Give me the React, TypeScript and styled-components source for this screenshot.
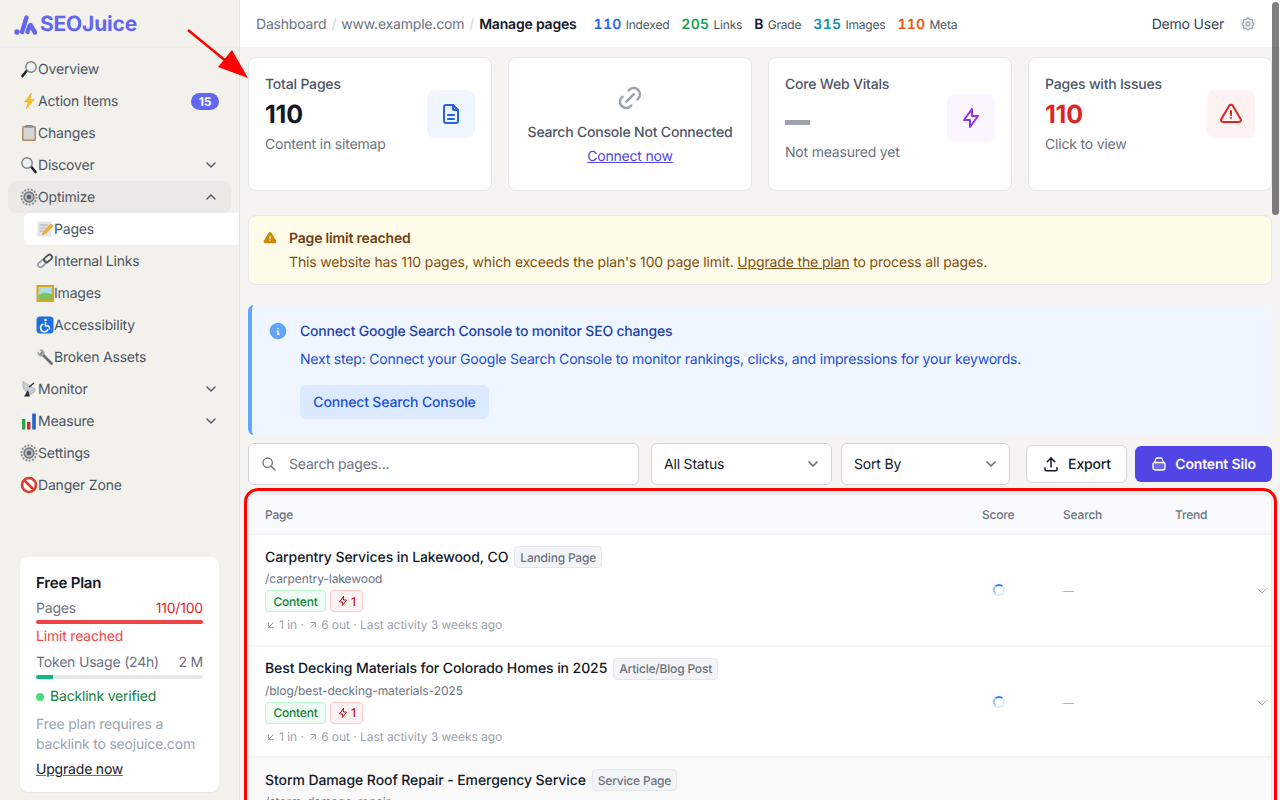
import React from 'react';
import styled, { createGlobalStyle } from 'styled-components';
import {
    TbAlertTriangle, TbAlertTriangleFilled, TbArrowDownLeft, TbArrowUpRight, TbBolt, TbChevronDown, TbChevronUp,
    TbFileDescription, TbInfoCircleFilled, TbLink, TbSearch, TbSettings, TbUpload,
} from 'react-icons/tb';

const GlobalStyle = createGlobalStyle`
    html, body { margin: 0; height: 100%; overflow: hidden; }
    body { font-family: Inter, "Liberation Sans", sans-serif; background: #f5f4f2; color: #111827; text-rendering: geometricPrecision; letter-spacing: -0.012em; }
    * { box-sizing: border-box; }
    button { text-rendering: geometricPrecision; letter-spacing: -0.012em; }
`;

const Shell = styled.div`
    display: flex;
    width: 1280px;
    height: 800px;
    overflow: hidden;
    position: relative;
`;

const Sidebar = styled.aside`
    flex: 0 0 240px;
    height: 800px;
    background: #f3f1ec;
    border-right: 1px solid #e6e4df;
    display: flex;
    flex-direction: column;
`;

const Brand = styled.div`
    height: 48px;
    flex: none;
    display: flex;
    align-items: center;
    gap: 1px;
    padding: 2px 0 0 13px;
    border-bottom: 1px solid #efede8;
    color: #6366f1;
    font-size: 21px;
    font-weight: 700;
`;

const Nav = styled.nav`
    display: flex;
    flex-direction: column;
    padding: 5px 0 0 8px;
`;

const NavRow = styled.div<{ $sub?: boolean; $open?: boolean; $active?: boolean }>`
    height: 32px;
    display: flex;
    align-items: center;
    font-size: 14px;
    color: #4b5563;
    margin-left: ${p => (p.$sub ? '16px' : '0')};
    margin-right: ${p => (p.$sub ? '0' : '8px')};
    padding: 0 12px 0 12px;
    background: ${p => (p.$active ? '#fff' : p.$open ? '#ebe9e5' : 'transparent')};
    border-radius: ${p => (p.$active ? '6px 0 0 6px' : '8px')};
`;

const NavEmoji = styled.svg`
    width: 18px;
    height: 18px;
    flex: none;
`;

const NavLabel = styled.span`
    flex: 1;
`;

const Count = styled.span`
    background: #6366f1;
    color: #fff;
    font-size: 12px;
    font-weight: 700;
    border-radius: 9px;
    height: 17px;
    width: 28px;
    display: flex;
    align-items: center;
    justify-content: center;
`;

const Chevron = styled.span`
    display: flex;
    color: #4b5563;
    font-size: 16px;
`;

const PlanCard = styled.div`
    margin: auto 20px 8px 20px;
    height: 235px;
    background: #fff;
    border-radius: 8px;
    padding: 17px 16px 0;
    box-shadow: 0 1px 2px rgba(0, 0, 0, 0.06);
    font-size: 14px;
    color: #6b7280;
`;

const PlanName = styled.div`
    font-size: 15px;
    line-height: 17px;
    font-weight: 600;
    color: #111827;
`;

const PlanLine = styled.div<{ $top?: number }>`
    display: flex;
    justify-content: space-between;
    line-height: 18px;
    margin-top: ${p => p.$top ?? 0}px;
`;

const PlanValue = styled.span<{ $red?: boolean }>`
    color: ${p => (p.$red ? '#dc2626' : '#6b7280')};
`;

const Track = styled.div<{ $top: number }>`
    height: 4px;
    margin-top: ${p => p.$top}px;
    border-radius: 2px;
    background: #e5e7eb;
    overflow: hidden;
`;

const Fill = styled.div<{ $color: string }>`
    height: 100%;
    background: ${p => p.$color};
`;

const LimitText = styled.div`
    color: #ef4444;
    line-height: 18px;
    margin: 4px 0 8px;
`;

const Verified = styled.div`
    display: flex;
    align-items: center;
    gap: 6px;
    color: #15803d;
    line-height: 18px;
    margin-top: 9px;
`;

const Dot = styled.span`
    width: 8px;
    height: 8px;
    border-radius: 50%;
    background: #4ade80;
`;

const PlanNote = styled.div`
    color: #9ca3af;
    line-height: 20px;
    margin-top: 9px;
`;

const UpgradeLink = styled.a`
    display: block;
    margin-top: 5px;
    line-height: 20px;
    color: #111827;
    text-decoration: underline;
    text-decoration-color: #6b7280;
`;

const Main = styled.main`
    flex: 1;
    min-width: 0;
    display: flex;
    flex-direction: column;
`;

const TopBar = styled.header`
    height: 47px;
    flex: none;
    background: #fff;
    display: flex;
    align-items: center;
    padding: 1px 24px 0 16px;
    font-size: 14px;
`;

const Crumb = styled.span<{ $current?: boolean }>`
    color: ${p => (p.$current ? '#111827' : '#6b7280')};
    font-weight: ${p => (p.$current ? 600 : 400)};
`;

const Slash = styled.span`
    color: #d1d5db;
    margin: 0 5px;
`;

const Stats = styled.div`
    display: flex;
    gap: 12px;
    margin-left: 17px;
`;

const Stat = styled.span`
    font-size: 12px;
    color: #4b5563;
    display: flex;
    align-items: baseline;
    gap: 4px;
`;

const StatValue = styled.b<{ $color: string }>`
    font-size: 14px;
    font-weight: 600;
    font-variant-numeric: tabular-nums;
    letter-spacing: 0.3px;
    color: ${p => p.$color};
`;

const UserName = styled.span`
    margin-left: auto;
    color: #374151;
`;

const Gear = styled.span`
    display: flex;
    margin-left: 16px;
    color: #9ca3af;
    font-size: 16px;
`;

const Content = styled.div`
    padding: 10px 8px 0;
    display: flex;
    flex-direction: column;
`;

const CardGrid = styled.div`
    display: grid;
    grid-template-columns: repeat(4, 244px);
    gap: 16px;
`;

const Card = styled.div`
    height: 134px;
    background: #fff;
    border: 1px solid #e5e7eb;
    border-radius: 8px;
    padding: 17px 16px 0;
    display: flex;
    justify-content: space-between;
    align-items: flex-start;
`;

const CardCentered = styled(Card)`
    flex-direction: column;
    align-items: center;
    justify-content: flex-start;
    padding: 25px 8px 0;
`;

const CardTitle = styled.div`
    font-size: 14px;
    line-height: 20px;
    font-weight: 500;
    color: #4b5563;
`;

const CardValue = styled.div<{ $color?: string }>`
    font-size: 25px;
    line-height: 32px;
    font-weight: 700;
    margin-top: 4px;
    color: ${p => p.$color ?? '#111827'};
`;

const CardDash = styled.div`
    width: 25px;
    height: 5px;
    background: #9ca3af;
    margin: 25px 0 18px;
`;

const CardHint = styled.div`
    font-size: 14px;
    line-height: 20px;
    color: #6b7280;
    margin-top: 4px;
`;

const IconTile = styled.div<{ $bg: string; $color: string; $top: number }>`
    width: 48px;
    height: 48px;
    flex: none;
    border-radius: 8px;
    margin-top: ${p => p.$top}px;
    display: flex;
    align-items: center;
    justify-content: center;
    font-size: 24px;
    background: ${p => p.$bg};
    color: ${p => p.$color};
`;

const ConnectIcon = styled.div`
    display: flex;
    color: #9ca3af;
    font-size: 30px;
`;

const ConnectTitle = styled.div`
    font-size: 14px;
    line-height: 20px;
    font-weight: 500;
    color: #4b5563;
    white-space: nowrap;
    margin-top: 10px;
`;

const ConnectLink = styled.a`
    font-size: 14px;
    line-height: 20px;
    color: #4f46e5;
    text-decoration: underline;
    margin-top: 4px;
`;

const LimitAlert = styled.div`
    height: 70px;
    margin-top: 24px;
    background: #fefce8;
    border: 1px solid #e5e7eb;
    border-radius: 8px;
    padding: 13px 16px 0 14px;
    display: flex;
    gap: 12px;
`;

const AlertIcon = styled.span`
    display: flex;
    font-size: 14px;
    color: #ca8a04;
    margin-top: 2px;
`;

const AlertTitle = styled.div`
    font-size: 14px;
    line-height: 20px;
    font-weight: 600;
    color: #713f12;
`;

const AlertText = styled.div`
    font-size: 14px;
    line-height: 20px;
    margin-top: 4px;
    letter-spacing: -0.0105em;
    color: #854d0e;
    & u { color: #854d0e; }
`;

const InfoBox = styled.div`
    height: 130px;
    margin-top: 20px;
    background: #eff6ff;
    border-left: 4px solid #60a5fa;
    border-radius: 6px;
    padding: 17px 16px 0 16px;
    display: flex;
    gap: 12px;
`;

const InfoIcon = styled.span`
    display: flex;
    font-size: 20px;
    color: #60a5fa;
    height: 20px;
    margin-top: -1px;
`;

const InfoTitle = styled.div`
    font-size: 14px;
    line-height: 20px;
    font-weight: 500;
    color: #1e40af;
`;

const InfoText = styled.div`
    font-size: 14px;
    line-height: 20px;
    margin-top: 8px;
    color: #1d4ed8;
`;

const InfoButton = styled.button`
    display: block;
    height: 34px;
    width: 189px;
    margin-top: 15px;
    padding: 0;
    background: #dbeafe;
    border: 0;
    border-radius: 6px;
    font: 500 14px Inter, "Liberation Sans", sans-serif;
    color: #1d4ed8;
`;

const Toolbar = styled.div`
    display: flex;
    align-items: center;
    height: 42px;
    margin-top: 8px;
`;

const SearchBox = styled.div`
    width: 391px;
    height: 42px;
    background: #fff;
    border: 1px solid #d1d5db;
    border-radius: 6px;
    display: flex;
    align-items: center;
    padding: 0 0 0 12px;
    gap: 12px;
    font-size: 14px;
    color: #6b7280;
    & svg { font-size: 16px; }
`;

const SelectBox = styled.div<{ $w: number; $ml: number }>`
    width: ${p => p.$w}px;
    margin-left: ${p => p.$ml}px;
    height: 42px;
    background: #fff;
    border: 1px solid #d1d5db;
    border-radius: 6px;
    display: flex;
    align-items: center;
    justify-content: space-between;
    padding: 0 10px 0 12px;
    font-size: 14px;
    color: #111827;
    & svg { color: #6b7280; font-size: 16px; stroke-width: 2.6; }
`;

const ExportButton = styled.button`
    width: 101px;
    height: 38px;
    margin-left: 16px;
    padding: 0;
    background: #fff;
    border: 1px solid #d1d5db;
    border-radius: 6px;
    display: flex;
    align-items: center;
    justify-content: center;
    gap: 8px;
    font: 500 14px Inter, "Liberation Sans", sans-serif;
    color: #111827;
    & svg { font-size: 18px; }
`;

const SiloButton = styled.button`
    width: 137px;
    height: 36px;
    margin-left: 8px;
    padding: 0;
    background: #4f46e5;
    border: 0;
    border-radius: 6px;
    display: flex;
    align-items: center;
    justify-content: center;
    gap: 8px;
    font: 600 14px Inter, "Liberation Sans", sans-serif;
    color: #fff;
`;

const SiloIcon = styled.svg`
    width: 16px;
    height: 16px;
`;

const Table = styled.div`
    margin-top: 9px;
    background: #fff;
    border: 1px solid #e5e7eb;
    border-radius: 8px 8px 0 0;
`;

const Columns = styled.div`
    display: grid;
    grid-template-columns: 717px 81px 112px 1fr;
`;

const HeadRow = styled(Columns)`
    height: 40px;
    align-items: center;
    background: #f9fafb;
    border-bottom: 2px solid #f3f4f6;
    border-radius: 8px 8px 0 0;
    padding-left: 16px;
    font-size: 12px;
    font-weight: 500;
    color: #6b7280;
`;

const BodyRow = styled(Columns)<{ $shaded?: boolean }>`
    height: 111.5px;
    padding: 11px 0 0 16px;
    border-bottom: 2px solid #f3f4f6;
    background: ${p => (p.$shaded ? '#fafafa' : '#fff')};
    position: relative;
`;

const TitleLine = styled.div`
    display: flex;
    align-items: center;
    gap: 6px;
    height: 22px;
`;

const PageTitle = styled.span`
    font-size: 14px;
    font-weight: 500;
    letter-spacing: -0.006em;
    color: #111827;
`;

const TypeTag = styled.span`
    height: 22px;
    padding: 0 5px;
    display: flex;
    align-items: center;
    background: #f3f4f6;
    border: 1px solid #e5e7eb;
    border-radius: 4px;
    font-size: 12px;
    font-weight: 500;
    color: #6b7280;
`;

const PagePath = styled.div`
    font-size: 12px;
    line-height: 16px;
    margin-top: 3px;
    letter-spacing: -0.006em;
    color: #6b7280;
`;

const TagLine = styled.div`
    display: flex;
    gap: 4px;
    margin-top: 3px;
`;

const ContentTag = styled.span`
    height: 22px;
    width: 61px;
    display: flex;
    align-items: center;
    justify-content: center;
    background: #f0fdf4;
    border: 1px solid #bbf7d0;
    border-radius: 4px;
    font-size: 12px;
    font-weight: 500;
    color: #15803d;
`;

const IssueTag = styled.span`
    height: 22px;
    width: 33px;
    display: flex;
    align-items: center;
    justify-content: center;
    gap: 2px;
    background: #fef2f2;
    border: 1px solid #fecaca;
    border-radius: 4px;
    font-size: 12px;
    font-weight: 500;
    color: #b91c1c;
    & svg { font-size: 12px; }
`;

const MetaLine = styled.div`
    display: flex;
    align-items: center;
    font-size: 12px;
    line-height: 16px;
    margin-top: 5px;
    letter-spacing: -0.004em;
    color: #9ca3af;
    & svg { font-size: 12px; margin-right: 2px; }
`;

const Spinner = styled.span`
    width: 12px;
    height: 12px;
    margin: 38px 0 0 11px;
    border-radius: 50%;
    border: 2px solid #dbeafe;
    border-top-color: #3b82f6;
    border-left-color: #93c5fd;
`;

const NoValue = styled.span`
    margin-top: 35px;
    font-size: 11px;
    line-height: 20px;
    color: #9ca3af;
`;

const RowChevron = styled.span`
    position: absolute;
    right: 1px;
    top: 48px;
    display: flex;
    font-size: 16px;
    color: #9ca3af;
    & svg { stroke-width: 1.4; }
`;

// annotations sitting on top of the screenshot
const Highlight = styled.div`
    position: absolute;
    left: 244px;
    top: 488px;
    width: 1033px;
    height: 340px;
    border: 3px solid #ff0000;
    border-radius: 14px;
    pointer-events: none;
`;

const Arrow = styled.svg`
    position: absolute;
    left: 180px;
    top: 22px;
    width: 76px;
    height: 64px;
`;

const ScrollThumb = styled.div`
    position: absolute;
    right: 1px;
    top: 2px;
    width: 7px;
    height: 213px;
    border-radius: 4px;
    background: rgba(0, 0, 0, 0.5);
`;

const Logo = () => (
    <svg width="26" height="24" viewBox="0 0 26 24" fill="none" stroke="#6366f1" strokeLinecap="round">
        <circle cx="4" cy="19" r="2.7" fill="#6366f1" stroke="none" />
        <path d="M9 19 L13.5 4.5" strokeWidth="4.4" />
        <path d="M14.5 19 L16.5 13" strokeWidth="4.4" />
        <path d="M17.5 12 L22 19.5" strokeWidth="4.4" />
    </svg>
);

// the nav uses colour emoji in the original, drawn here so they don't depend on an installed font
const emojiArt: Record<string, React.ReactNode> = {
    overviewGlass: (
        <>
            <path d="M2.5 16 L7 10.5" stroke="#222" strokeWidth="2.6" strokeLinecap="round" />
            <circle cx="11" cy="7" r="5.2" fill="#eef1f4" stroke="#7d8288" strokeWidth="1.4" />
        </>
    ),
    bolt: <path d="M11.5 1 L4.5 10 H8.5 L6 17 L14 7.5 H9.8 Z" fill="#fbbf24" stroke="#f59e0b" strokeWidth=".6" />,
    clipboard: (
        <>
            <rect x="2" y="2" width="14" height="15" rx="1.5" fill="#b08a5e" />
            <rect x="3.5" y="3.5" width="11" height="12" fill="#d5d6d8" />
            <rect x="5" y="1" width="8" height="2.5" rx="1" fill="#8b8f94" />
        </>
    ),
    discoverGlass: (
        <>
            <path d="M15.5 16 L11 10.5" stroke="#222" strokeWidth="2.6" strokeLinecap="round" />
            <circle cx="7" cy="7" r="5.2" fill="#eef1f4" stroke="#7d8288" strokeWidth="1.4" />
        </>
    ),
    gear: (
        <>
            <circle cx="9" cy="9" r="7.6" fill="none" stroke="#8d9197" strokeWidth="2" strokeDasharray="2 1.4" />
            <circle cx="9" cy="9" r="5" fill="#b4b8bd" stroke="#6f7379" strokeWidth="1.4" />
            <circle cx="9" cy="9" r="2.2" fill="#5b6068" />
        </>
    ),
    memo: (
        <>
            <rect x="1.5" y="1.5" width="14" height="15" fill="#e4e5e8" />
            <path d="M3.5 5h9M3.5 8h7M3.5 11h4" stroke="#a9adb3" strokeWidth="1" />
            <path d="M6 15 L8 11 L15 4 L17 6 L10 13 Z" fill="#f2b233" stroke="#d08f1a" strokeWidth=".5" />
        </>
    ),
    chain: (
        <>
            <rect x="1.5" y="9" width="9" height="5" rx="2.5" transform="rotate(-40 6 11.5)" fill="none" stroke="#9aa0a7" strokeWidth="1.8" />
            <rect x="7.5" y="4" width="9" height="5" rx="2.5" transform="rotate(-40 12 6.5)" fill="none" stroke="#50555b" strokeWidth="1.8" />
        </>
    ),
    picture: (
        <>
            <rect x="0.5" y="1" width="17.5" height="17" fill="#d9a520" />
            <rect x="2.5" y="3" width="13.5" height="13" fill="#a8dcec" />
            <path d="M2.5 16 V11 Q9 7 16 10.5 V16 Z" fill="#7cc35c" />
            <circle cx="6" cy="6" r="1.2" fill="#fde047" />
        </>
    ),
    wheelchair: (
        <>
            <rect x="0.5" y="0.5" width="17" height="17" rx="3.5" fill="#1d6fe0" />
            <circle cx="9.5" cy="4" r="1.3" fill="#fff" />
            <path d="M9.5 6 V10 H12.5 L14 13.5 M7.5 8.2 A3.8 3.8 0 1 0 12 13" fill="none" stroke="#fff" strokeWidth="1.5" />
        </>
    ),
    wrench: (
        <>
            <path d="M5.5 5.5 L15.5 15.5" stroke="#6b7076" strokeWidth="2.8" strokeLinecap="round" />
            <path d="M1.5 3.5 L4.5 6 L6 4.5 L3.5 1.5 A4 4 0 0 1 8.5 6.5 L5.5 8.5 A4 4 0 0 1 1.5 3.5 Z" fill="#9ba0a6" />
        </>
    ),
    dish: (
        <>
            <path d="M3 1.5 Q1 10 10 14.5 Q16 12 15 9 Z" fill="#c7ccd2" stroke="#9aa0a7" strokeWidth=".6" />
            <path d="M8 10 L4 16.5 H10 Z" fill="#2c2f33" />
            <path d="M9 7 L14 3" stroke="#2c2f33" strokeWidth="1.4" />
        </>
    ),
    chart: (
        <>
            <rect x="1" y="0.5" width="16" height="17" fill="#f2f3f5" />
            <rect x="2" y="7" width="3.4" height="10.5" fill="#2fa34a" />
            <rect x="7" y="10" width="3.4" height="7.5" fill="#d42a2a" />
            <rect x="12.2" y="1.5" width="3.6" height="16" fill="#2563c9" />
        </>
    ),
    ban: (
        <>
            <circle cx="9" cy="9" r="7" fill="#fff" stroke="#e0392f" strokeWidth="2.6" />
            <path d="M4 4 L14 14" stroke="#e0392f" strokeWidth="2.6" />
        </>
    ),
};

type NavEntry = { label: string; art: string; sub?: boolean; caret?: 'down' | 'up'; count?: number; open?: boolean; active?: boolean };

const navEntries: NavEntry[] = [
    { label: 'Overview', art: 'overviewGlass' },
    { label: 'Action Items', art: 'bolt', count: 15 },
    { label: 'Changes', art: 'clipboard' },
    { label: 'Discover', art: 'discoverGlass', caret: 'down' },
    { label: 'Optimize', art: 'gear', caret: 'up', open: true },
    { label: 'Pages', art: 'memo', sub: true, active: true },
    { label: 'Internal Links', art: 'chain', sub: true },
    { label: 'Images', art: 'picture', sub: true },
    { label: 'Accessibility', art: 'wheelchair', sub: true },
    { label: 'Broken Assets', art: 'wrench', sub: true },
    { label: 'Monitor', art: 'dish', caret: 'down' },
    { label: 'Measure', art: 'chart', caret: 'down' },
    { label: 'Settings', art: 'gear' },
    { label: 'Danger Zone', art: 'ban' },
];

const stats = [
    { value: '110', label: 'Indexed', color: '#2563eb' },
    { value: '205', label: 'Links', color: '#16a34a' },
    { value: 'B', label: 'Grade', color: '#111827' },
    { value: '315', label: 'Images', color: '#0891b2' },
    { value: '110', label: 'Meta', color: '#ea580c' },
];

const pages = [
    { title: 'Carpentry Services in Lakewood, CO', type: 'Landing Page', path: '/carpentry-lakewood' },
    { title: 'Best Decking Materials for Colorado Homes in 2025', type: 'Article/Blog Post', path: '/blog/best-decking-materials-2025' },
    { title: 'Storm Damage Roof Repair - Emergency Service', type: 'Service Page', path: '/storm-damage-repair', shaded: true },
];

export default function App() {
    return (
        <Shell>
            <GlobalStyle />
            <Sidebar>
                <Brand><Logo />SEOJuice</Brand>
                <Nav>
                    {navEntries.map(item => (
                        <NavRow key={item.label} $sub={item.sub} $open={item.open} $active={item.active}>
                            <NavEmoji viewBox="0 0 18 18">{emojiArt[item.art]}</NavEmoji>
                            <NavLabel>{item.label}</NavLabel>
                            {item.count && <Count>{item.count}</Count>}
                            {item.caret && <Chevron>{item.caret === 'up' ? <TbChevronUp /> : <TbChevronDown />}</Chevron>}
                        </NavRow>
                    ))}
                </Nav>
                <PlanCard>
                    <PlanName>Free Plan</PlanName>
                    <PlanLine $top={9}><span>Pages</span><PlanValue $red>110/100</PlanValue></PlanLine>
                    <Track $top={2}><Fill $color="#ef4444" style={{ width: '100%' }} /></Track>
                    <LimitText>Limit reached</LimitText>
                    <PlanLine><span>Token Usage (24h)</span><PlanValue>2 M</PlanValue></PlanLine>
                    <Track $top={3}><Fill $color="#10b981" style={{ width: '10%' }} /></Track>
                    <Verified><Dot />Backlink verified</Verified>
                    <PlanNote>Free plan requires a<br />backlink to seojuice.com</PlanNote>
                    <UpgradeLink>Upgrade now</UpgradeLink>
                </PlanCard>
            </Sidebar>
            <Main>
                <TopBar>
                    <Crumb>Dashboard</Crumb><Slash>/</Slash>
                    <Crumb>www.example.com</Crumb><Slash>/</Slash>
                    <Crumb $current>Manage pages</Crumb>
                    <Stats>
                        {stats.map(s => (
                            <Stat key={s.label}><StatValue $color={s.color}>{s.value}</StatValue>{s.label}</Stat>
                        ))}
                    </Stats>
                    <UserName>Demo User</UserName>
                    <Gear><TbSettings /></Gear>
                </TopBar>
                <Content>
                    <CardGrid>
                        <Card>
                            <div>
                                <CardTitle>Total Pages</CardTitle>
                                <CardValue>110</CardValue>
                                <CardHint>Content in sitemap</CardHint>
                            </div>
                            <IconTile $bg="#eff6ff" $color="#2563eb" $top={15}><TbFileDescription /></IconTile>
                        </Card>
                        <CardCentered>
                            <ConnectIcon><TbLink /></ConnectIcon>
                            <ConnectTitle>Search Console Not Connected</ConnectTitle>
                            <ConnectLink>Connect now</ConnectLink>
                        </CardCentered>
                        <Card>
                            <div>
                                <CardTitle>Core Web Vitals</CardTitle>
                                <CardDash />
                                <CardHint>Not measured yet</CardHint>
                            </div>
                            <IconTile $bg="#faf5ff" $color="#9333ea" $top={19}><TbBolt /></IconTile>
                        </Card>
                        <Card>
                            <div>
                                <CardTitle>Pages with Issues</CardTitle>
                                <CardValue $color="#dc2626">110</CardValue>
                                <CardHint>Click to view</CardHint>
                            </div>
                            <IconTile $bg="#fef2f2" $color="#dc2626" $top={15}><TbAlertTriangle /></IconTile>
                        </Card>
                    </CardGrid>

                    <LimitAlert>
                        <AlertIcon><TbAlertTriangleFilled /></AlertIcon>
                        <div>
                            <AlertTitle>Page limit reached</AlertTitle>
                            <AlertText>This website has 110 pages, which exceeds the plan's 100 page limit. <u>Upgrade the plan</u> to process all pages.</AlertText>
                        </div>
                    </LimitAlert>

                    <InfoBox>
                        <InfoIcon><TbInfoCircleFilled /></InfoIcon>
                        <div>
                            <InfoTitle>Connect Google Search Console to monitor SEO changes</InfoTitle>
                            <InfoText>Next step: Connect your Google Search Console to monitor rankings, clicks, and impressions for your keywords.</InfoText>
                            <InfoButton>Connect Search Console</InfoButton>
                        </div>
                    </InfoBox>

                    <Toolbar>
                        <SearchBox><TbSearch />Search pages...</SearchBox>
                        <SelectBox $w={181} $ml={12}>All Status<TbChevronDown /></SelectBox>
                        <SelectBox $w={169} $ml={9}>Sort By<TbChevronDown /></SelectBox>
                        <ExportButton><TbUpload />Export</ExportButton>
                        <SiloButton>
                            <SiloIcon viewBox="0 0 16 16" fill="none" stroke="#fff" strokeWidth="1.3" strokeLinejoin="round">
                                <path d="M3.5 6.5 L4.6 3.4 Q5 2 6.5 2 H9.5 Q11 2 11.4 3.4 L12.5 6.5" />
                                <rect x="2" y="6.5" width="12" height="7.5" rx="2" fill="rgba(255,255,255,.2)" />
                            </SiloIcon>
                            Content Silo
                        </SiloButton>
                    </Toolbar>

                    <Table>
                        <HeadRow>
                            <span>Page</span>
                            <span>Score</span>
                            <span>Search</span>
                            <span>Trend</span>
                        </HeadRow>
                        {pages.map(page => (
                            <BodyRow key={page.path} $shaded={page.shaded}>
                                <div>
                                    <TitleLine>
                                        <PageTitle>{page.title}</PageTitle>
                                        <TypeTag>{page.type}</TypeTag>
                                    </TitleLine>
                                    <PagePath>{page.path}</PagePath>
                                    <TagLine>
                                        <ContentTag>Content</ContentTag>
                                        <IssueTag><TbBolt />1</IssueTag>
                                    </TagLine>
                                    <MetaLine>
                                        <TbArrowDownLeft />1 in ·&nbsp;<TbArrowUpRight />6 out · Last activity 3 weeks ago
                                    </MetaLine>
                                </div>
                                <Spinner />
                                <NoValue>—</NoValue>
                                <span />
                                <RowChevron><TbChevronDown /></RowChevron>
                            </BodyRow>
                        ))}
                    </Table>
                </Content>
            </Main>
            <Highlight />
            <Arrow viewBox="0 0 76 64">
                <path d="M8 8 L52 44" stroke="#ff0000" strokeWidth="2.5" />
                <path d="M68 56 L38 45 L52 28 Z" fill="#ff0000" />
            </Arrow>
            <ScrollThumb />
        </Shell>
    );
}
